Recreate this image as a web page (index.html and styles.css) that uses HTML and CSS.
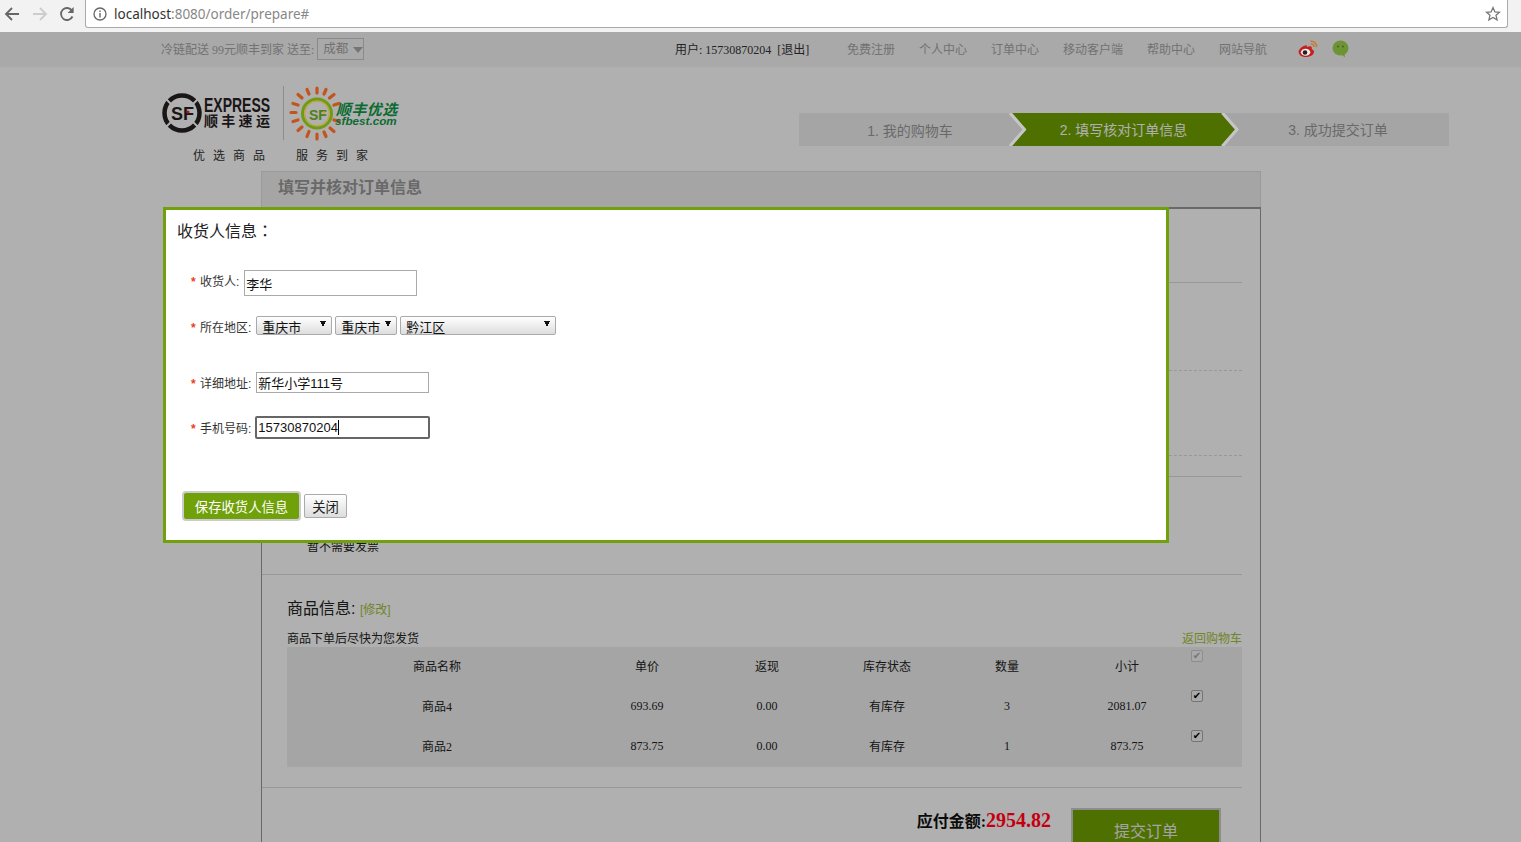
FILE: index.html
```html
<!DOCTYPE html>
<html lang="en">
<head>
    <meta charset="UTF-8">
    <meta name="viewport" content="width=device-width, initial-scale=1.0">
    <title>填写核对订单信息</title>
    <link rel="stylesheet" href="styles.css">
</head>
<body>
    <div class="browser-bar">
        <svg class="nav-icon" width="16" height="16" viewBox="0 0 16 16"><path d="M15 8H2M8 2L2 8l6 6" fill="none" stroke="#666" stroke-width="1.8"/></svg>
        <svg class="nav-icon forward" width="16" height="16" viewBox="0 0 16 16"><path d="M1 8h13M8 2l6 6-6 6" fill="none" stroke="#ccc" stroke-width="1.8"/></svg>
        <svg class="nav-icon reload" width="16" height="16" viewBox="0 0 16 16"><path d="M13.5 10.5A6 6 0 1 1 13 4.6" fill="none" stroke="#666" stroke-width="1.8"/><path d="M14.6 1v6h-6z" fill="#666"/></svg>
        <div class="address-box">
            <svg width="14" height="14" viewBox="0 0 14 14"><circle cx="7" cy="7" r="6" fill="none" stroke="#666" stroke-width="1.3"/><path d="M7 6v4.5M7 3.4v1.5" stroke="#666" stroke-width="1.4"/></svg>
            <span class="url"><b>localhost</b>:8080/order/prepare#</span>
            <svg class="star" width="16" height="16" viewBox="0 0 16 16"><path d="M8 1.6l1.9 4.3 4.6.4-3.5 3 1.1 4.6L8 11.5l-4.1 2.4L5 9.3l-3.5-3 4.6-.4z" fill="none" stroke="#777" stroke-width="1.3"/></svg>
        </div>
    </div>

    <div class="top-bar">
        <div class="top-left">
            冷链配送 99元顺丰到家 送至:
            <span class="city"><span class="city-name">成都</span><i></i></span>
        </div>
        <div class="top-user">用户: 15730870204&nbsp; [退出]</div>
        <div class="top-links">
            <a>免费注册</a>
            <a>个人中心</a>
            <a>订单中心</a>
            <a>移动客户端</a>
            <a>帮助中心</a>
            <a>网站导航</a>
        </div>
        <div class="top-icons">
            <svg class="above-mask" width="20" height="18" viewBox="0 0 20 18">
                <path d="M8 5.2C4 6 .6 9.400.6 12c0 3 3.600 5 7.400 5 4.500 0 8-2.500 8-5 0-1.600-1.300-2.400-2.300-2.700.5-1.500.2-3-1.700-3-1 0-2 .4-2.800.8-.1-1.200-.4-2.200-1.200-1.900z" fill="#c4211c"/>
                <ellipse cx="7.600" cy="12.300" rx="4.700" ry="3.500" fill="#eee"/>
                <circle cx="7" cy="12.500" r="2.300" fill="#222"/>
                <path d="M12.500 1.200c3.500-.5 6.500 2.500 6 6M12.800 4c2-.3 3.500 1.200 3.200 3" fill="none" stroke="#c9772c" stroke-width="1.500"/>
            </svg>
            <svg class="above-mask" width="17" height="18" viewBox="0 0 17 18">
                <ellipse cx="8.500" cy="8" rx="8" ry="7.500" fill="#6d9433"/>
                <path d="M9 14l4 3.500-.5-4.500z" fill="#6d9433"/>
                <circle cx="6" cy="6.500" r="1" fill="#4e5c3a"/>
                <circle cx="11" cy="6.500" r="1" fill="#4e5c3a"/>
            </svg>
        </div>
    </div>

    <div class="header">
        <div class="logo-block">
            <div class="logos">
                <svg class="above-mask" width="112" height="46" viewBox="0 0 112 46">
                    <circle cx="21" cy="23" r="17.500" fill="none" stroke="#1a1516" stroke-width="4.500"/>
                    <path d="M5 9l7 7M37 9l-7 7M5 37l7-7M37 37l-7-7" stroke="#b0b0b0" stroke-width="2"/>
                    <text x="10" y="30" class="sf-mark">SF</text>
                    <circle cx="27" cy="22" r="1.600" fill="#b01020"/>
                    <text transform="translate(43 22) scale(1 1.380)" class="sf-express">EXPRESS</text>
                    <text x="43" y="36" class="sf-cn">顺丰速运</text>
                </svg>
                <span class="logo-line"></span>
                <svg class="above-mask" width="116" height="58" viewBox="0 0 116 58">
                    <g transform="translate(0 1.500)">
                        <g stroke="#c4531c" stroke-width="3.200" stroke-linecap="round">
                            <path d="M32 2.500v5M41 4l-2 4.500M49 9l-4.500 3.500M54 18l-5 1.500M54 36l-5-1.500M49 46l-4-3.500M41 51l-2-4.500M32 53.500v-5M22 51l2-5M13 45l4-3.500M8 36l5-1.500M6 27h5M8 18l5 1.500M13 9l4 3.500M22 4l2 4.500"/>
                        </g>
                        <circle cx="32" cy="28" r="14.500" fill="none" stroke="#6f9c12" stroke-width="3"/>
                        <circle cx="32" cy="28" r="12.300" fill="none" stroke="#c9a21a" stroke-width="1"/>
                        <text x="24" y="34" class="best-mark">SF</text>
                        <circle cx="39" cy="27" r="1.300" fill="#d9a21a"/>
                    </g>
                    <text x="51" y="31" class="best-cn">顺丰优选</text>
                    <text x="50" y="41" class="best-en">sfbest.com</text>
                </svg>
            </div>
            <div class="slogan">
                <span>优选商品</span>
                <span>服务到家</span>
            </div>
        </div>
        <div class="steps">
            <div class="step step-one">1. 我的购物车</div>
            <div class="step step-two">2. 填写核对订单信息</div>
            <div class="step step-three">3. 成功提交订单</div>
            <svg class="step-edges" width="650" height="33" viewBox="0 0 650 33">
                <path d="M211 0l14.500 16.500L211 33M423.500 0L438 16.500 423.500 33" fill="none" stroke="#c6c6c6" stroke-width="3"/>
            </svg>
        </div>
    </div>

    <div class="panel">
        <div class="panel-title">填写并核对订单信息</div>
        <div class="panel-body">
            <div class="sec sec-receiver"></div>
            <div class="sec sec-pay"></div>
            <div class="sec sec-ship"></div>
            <div class="sec sec-note"></div>
            <div class="sec sec-invoice">暂不需要发票</div>
            <div class="sec sec-goods">
                <div class="goods-head">商品信息: <a>[修改]</a></div>
                <div class="goods-sub">
                    <span>商品下单后尽快为您发货</span>
                    <a>返回购物车</a>
                </div>
                <table class="goods-table">
                    <colgroup>
                        <col class="col-name">
                        <col class="col-num">
                        <col class="col-num">
                        <col class="col-num">
                        <col class="col-num">
                        <col class="col-num">
                        <col>
                    </colgroup>
                    <tr>
                        <th>商品名称</th>
                        <th>单价</th>
                        <th>返现</th>
                        <th>库存状态</th>
                        <th>数量</th>
                        <th>小计</th>
                        <th class="check-cell"><input type="checkbox" checked disabled></th>
                    </tr>
                    <tr>
                        <td>商品4</td>
                        <td>693.69</td>
                        <td>0.00</td>
                        <td>有库存</td>
                        <td>3</td>
                        <td>2081.07</td>
                        <td class="check-cell"><input type="checkbox" checked></td>
                    </tr>
                    <tr>
                        <td>商品2</td>
                        <td>873.75</td>
                        <td>0.00</td>
                        <td>有库存</td>
                        <td>1</td>
                        <td>873.75</td>
                        <td class="check-cell"><input type="checkbox" checked></td>
                    </tr>
                </table>
            </div>
            <div class="order-foot">
                <div class="amount">应付金额:<span class="above-mask">2954.82</span></div>
                <button class="submit-btn">提交订单</button>
            </div>
        </div>
    </div>

    <div class="mask"></div>

    <div class="modal">
        <h3>收货人信息：</h3>
        <div class="form-row row-name">
            <label><em>*</em>收货人:</label>
            <input type="text" class="input-name" value="李华">
        </div>
        <div class="form-row row-area">
            <label><em>*</em>所在地区:</label>
            <select class="sel-a"><option>重庆市</option></select>
            <select class="sel-b"><option>重庆市</option></select>
            <select class="sel-c"><option>黔江区</option></select>
        </div>
        <div class="form-row row-addr">
            <label><em>*</em>详细地址:</label>
            <input type="text" class="input-line" value="新华小学111号">
        </div>
        <div class="form-row row-phone">
            <label><em>*</em>手机号码:</label>
            <span class="caret-wrap">
                <input type="text" class="input-line input-focus" value="15730870204">
                <i class="caret"></i>
            </span>
        </div>
        <div class="modal-btns">
            <button class="save-btn">保存收货人信息</button>
            <button class="close-btn">关闭</button>
        </div>
    </div>
</body>
</html>
```

FILE: styles.css
```css
* {
    margin: 0;
    padding: 0;
    box-sizing: border-box;
}

html, body {
    height: 100%;
    overflow: hidden;
}

body {
    position: relative;
    background: #fff;
    color: #222;
    font-family: "Liberation Serif", "Noto Sans CJK SC", serif;
    font-size: 12px;
}

a {
    color: inherit;
}

/* browser chrome */
.browser-bar {
    display: flex;
    align-items: flex-start;
    height: 32px;
    background: #f2f2f2;
}

.nav-icon {
    margin: 6px 0 0 4px;
}

.forward {
    margin-left: 12px;
}

.reload {
    margin-left: 11px;
}

.address-box {
    display: flex;
    align-items: center;
    gap: 7px;
    width: 1423px;
    height: 28px;
    margin-left: 10px;
    padding: 0 6px 0 7px;
    background: #fff;
    border: 1px solid #aaa;
    border-top: none;
    border-radius: 0 0 3px 3px;
}

.url {
    color: #888;
    font-family: "Noto Sans", sans-serif;
    font-size: 13.5px;
}

.url b {
    color: #333;
    font-weight: normal;
}

.star {
    margin-left: auto;
}

/* top bar */
.top-bar {
    display: flex;
    align-items: center;
    height: 35px;
    padding: 0 0 1px 161px;
    background: #f5f5f5;
    color: #a6a6a6;
}

.top-left {
    display: flex;
    align-items: center;
    width: 514px;
}

.city {
    display: flex;
    align-items: center;
    width: 47px;
    height: 22px;
    margin-left: 3px;
    padding-left: 5px;
    border: 1px solid #c8c8c8;
    font-size: 12.500px;
}

.city-name {
    padding-bottom: 3px;
}

.city i {
    margin: 2px 0 0 5px;
    border: 5px solid transparent;
    border-top: 6px solid #aaa;
    border-bottom: none;
}

.top-user {
    width: 172px;
    color: #333;
}

.top-links {
    display: flex;
    gap: 24px;
}

.top-icons {
    display: flex;
    align-items: center;
    gap: 14px;
    margin-left: 31px;
}

.above-mask {
    position: relative;
    z-index: 11;
}

/* logo and steps */
.header {
    display: flex;
    align-items: flex-start;
    height: 104px;
    padding-left: 161px;
}

.logo-block {
    width: 638px;
    padding-top: 17px;
}

.logos {
    display: flex;
    align-items: center;
    height: 58px;
}

.logos svg:first-child {
    margin-right: 10px;
}

.logo-line {
    width: 1px;
    height: 54px;
    background: #ccc;
}

.logos svg:last-child {
    margin-left: 1px;
}

.slogan {
    display: flex;
    gap: 23px;
    margin: 4px 0 0 32px;
    line-height: 20px;
    letter-spacing: 8px;
    color: #333;
}

.steps {
    display: flex;
    position: relative;
    width: 650px;
    height: 33px;
    margin-top: 46px;
    background: #f0f0f0;
    color: #999;
    font-size: 14px;
    font-family: "Liberation Sans", "Noto Sans CJK SC", sans-serif;
    line-height: 33px;
    text-align: center;
}

.step {
    padding-top: 1px;
}

.step-one {
    width: 213px;
    padding-left: 9px;
    padding-top: 2px;
}

.step-two {
    width: 223px;
    background: #71a200;
    color: #fff;
    clip-path: polygon(0 0, 209px 0, 223px 50%, 209px 100%, 0 100%, 14px 50%);
}

.step-three {
    width: 214px;
    padding-right: 8px;
}

.step-edges {
    position: absolute;
    top: 0;
    left: 0;
    z-index: 11;
}

/* logo text */
.sf-mark {
    font: bold 18px "Liberation Sans", sans-serif;
    fill: #1a1516;
}

.sf-express {
    font: bold 14px "Liberation Sans", sans-serif;
    fill: #1a1516;
}

.sf-cn {
    font: bold 14px "Noto Sans CJK SC", sans-serif;
    letter-spacing: 3.300px;
    fill: #1a1516;
}

.best-mark {
    font: bold 14px "Liberation Sans", sans-serif;
    fill: #4f7f18;
}

.best-cn {
    font: italic bold 15px "Noto Sans CJK SC", sans-serif;
    letter-spacing: .400px;
    fill: #0c6b30;
}

.best-en {
    font: italic bold 11.700px "Liberation Sans", sans-serif;
    fill: #0c6b30;
}

/* order panel */
.panel {
    width: 1000px;
    margin-left: 261px;
}

.panel-title {
    height: 36px;
    padding-left: 16px;
    background: #f0f0f0;
    border: 1px solid #e0e0e0;
    border-bottom: none;
    color: #999;
    font-family: "Liberation Sans", "Noto Sans CJK SC", sans-serif;
    font-size: 16px;
    font-weight: bold;
    line-height: 31px;
}

.panel-body {
    border: 1px solid #999;
    border-bottom: none;
    border-top-width: 2px;
    height: 700px;
}

.sec {
    margin-right: 18px;
}

.sec-receiver {
    height: 74px;
    border-bottom: 1px solid #ddd;
}

.sec-pay {
    height: 88px;
    border-bottom: 1px dashed #ddd;
}

.sec-ship {
    height: 85px;
    border-bottom: 1px dashed #ddd;
}

.sec-note {
    height: 21px;
    border-bottom: 1px solid #ddd;
}

.sec-invoice {
    height: 98px;
    padding: 63px 0 0 45px;
    border-bottom: 1px solid #ddd;
    line-height: 14px;
}

.sec-goods {
    height: 213px;
    padding: 23px 0 0 25px;
    border-bottom: 1px solid #ddd;
}

.goods-head {
    height: 22px;
    font-family: "Liberation Sans", "Noto Sans CJK SC", sans-serif;
    font-size: 16px;
    line-height: 22px;
    color: #222;
}

.goods-head a {
    font-size: 12px;
    color: #9fc23a;
}

.goods-sub {
    display: flex;
    justify-content: space-between;
    height: 27px;
    padding-top: 10px;
    font-family: "Liberation Sans", "Noto Sans CJK SC", sans-serif;
    line-height: 18px;
}

.goods-sub a {
    color: #9fc23a;
}

.goods-table {
    width: 955px;
    table-layout: fixed;
    border-collapse: collapse;
    background: #f0f0f0;
}

.col-name {
    width: 300px;
}

.col-num {
    width: 120px;
}

.goods-table th,
.goods-table td {
    height: 40px;
    padding: 0 0 2px;
    font-weight: normal;
    text-align: center;
}

.goods-table .check-cell {
    padding: 3px 0 0 4px;
    text-align: left;
    vertical-align: top;
}

.check-cell input {
    display: block;
    position: relative;
    width: 12px;
    height: 12px;
    appearance: none;
    background: #f5f5f5;
    border: 1.500px solid #aaa;
    border-radius: 2px;
}

.check-cell input::before {
    content: "✔";
    display: block;
    color: #000;
    font: 10px/9px "DejaVu Sans", sans-serif;
    text-align: center;
}

.check-cell input:disabled {
    border-color: #ccc;
}

.check-cell input:disabled::before {
    color: #aaa;
}

.order-foot {
    display: flex;
    justify-content: flex-end;
    align-items: flex-start;
    padding: 20px 39px 0 0;
}

.amount {
    margin-right: 20px;
    color: #111;
    font-size: 16px;
    font-weight: bold;
    line-height: 24px;
}

.amount span {
    color: #c40010;
    font-size: 20px;
}

.submit-btn {
    width: 150px;
    height: 46px;
    padding-bottom: 4px;
    background: #71a200;
    border: 2px solid #ccc;
    border-bottom: none;
    color: #eee;
    font-family: "Liberation Sans", "Noto Sans CJK SC", sans-serif;
    font-size: 16px;
}

/* dialog */
.mask {
    position: absolute;
    top: 32px;
    left: 0;
    right: 0;
    bottom: 0;
    z-index: 10;
    background: rgba(0, 0, 0, 0.31);
}

.modal {
    position: absolute;
    top: 207px;
    left: 163px;
    z-index: 20;
    width: 1006px;
    height: 336px;
    background: #fff;
    border: 3px solid #70a00a;
    font-family: "Liberation Sans", "Noto Sans CJK SC", sans-serif;
}

.modal h3 {
    height: 22px;
    margin: 9px 0 0 11px;
    color: #222;
    font-family: "Noto Sans CJK TC", sans-serif;
    font-size: 16px;
    font-weight: normal;
    line-height: 22px;
}

.form-row {
    display: flex;
    align-items: center;
    padding-left: 25px;
}

.form-row label {
    flex-shrink: 0;
    margin-right: 5px;
    color: #333;
}

.form-row em {
    display: inline-block;
    width: 9px;
    color: #f04020;
    font-style: normal;
    font-weight: bold;
}

.row-name {
    margin-top: 29px;
}

.row-name label {
    padding-bottom: 5px;
}

.row-area {
    margin-top: 20px;
}

.row-area label {
    padding-top: 2px;
}

.row-area select {
    margin-right: 3px;
}

.row-addr {
    margin-top: 37px;
}

.row-phone {
    margin-top: 24px;
}

.form-row input {
    padding: 0 1px;
    background: #fff;
    border: 1px solid #aaa;
    color: #111;
    font: 13px "Liberation Sans", "Noto Sans CJK SC", sans-serif;
    outline: none;
}

.input-name {
    width: 173px;
    height: 26px;
}

.input-line {
    width: 173px;
    height: 21px;
}

.input-focus {
    display: block;
    width: 175px;
    height: 23px;
    margin: -1px 0 -1px -1px;
    padding: 0 1px !important;
    border: 2px solid #666 !important;
    border-radius: 2px;
}

.caret-wrap {
    position: relative;
    display: block;
}

.caret {
    position: absolute;
    top: 3px;
    left: 82px;
    width: 1px;
    height: 15px;
    background: #000;
}

.form-row select {
    height: 19px;
    padding: 3px 0 0 5px;
    appearance: none;
    border: 1px solid #aaa;
    border-radius: 2px;
    color: #111;
    font: 13px/16px "Liberation Sans", "Noto Sans CJK SC", sans-serif;
    background:
        linear-gradient(to top right, transparent 50%, #111 50%) right 8px top 4px / 3px 6px no-repeat,
        linear-gradient(to top left, transparent 50%, #111 50%) right 5px top 4px / 3px 6px no-repeat,
        linear-gradient(#fff, #ddd);
}

.sel-a {
    width: 76px;
}

.sel-b {
    width: 62px;
}

.sel-c {
    width: 156px;
}

.modal-btns {
    display: flex;
    align-items: center;
    gap: 3px;
    margin: 53px 0 0 16px;
}

.modal-btns button {
    font: 13.33px "Liberation Sans", "Noto Sans CJK SC", sans-serif;
}

.save-btn {
    width: 119px;
    height: 30px;
    background: #70a00a;
    border: 2px solid #ccc;
    border-radius: 4px;
    color: #fff;
}

.close-btn {
    width: 43px;
    height: 24px;
    background: linear-gradient(#fff, #ddd);
    border: 1px solid #aaa;
    border-radius: 2px;
    color: #222;
}
```
